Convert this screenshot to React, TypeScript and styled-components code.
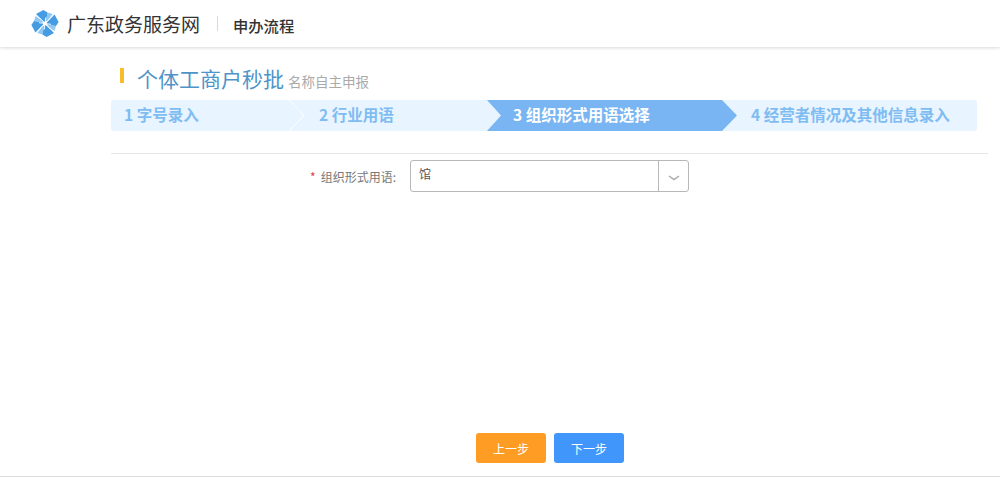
import React from "react";
import styled, { createGlobalStyle } from "styled-components";

const GlobalStyle = createGlobalStyle`
	html,
	body {
		margin: 0;
		padding: 0;
		background: #fff;
		font-family: "Noto Sans CJK SC", "Liberation Sans", sans-serif;
	}
`;

const steps = [
	{ label: "1 字号录入", width: 179, indent: 13 },
	{ label: "2 行业用语", width: 197, indent: 29 },
	{ label: "3 组织形式用语选择", width: 250, indent: 26, active: true },
	{ label: "4 经营者情况及其他信息录入", width: 240, indent: 14 },
];

const Logo = () => (
	<svg width="28" height="29" viewBox="-14 -14.5 28 29">
		{[0, 90, 180, 270].map((angle) => (
			<g key={angle} transform={`rotate(${angle})`}>
				<path d="M1 -2.5 L2.6 -11 L7.6 -9.4 L2.5 -2.5 Z" fill="#8fc8f4" />
				<path d="M-0.5 -1 L-9 -9.6 L-1.6 -13.6 L2.6 -11 L1 -2.5 Z" fill="#469ce2" />
				<path d="M0 0 L-5 -5.2" stroke="#fff" strokeWidth="0.9" />
				<path d="M0 0 L0.8 -6" stroke="#fff" strokeWidth="0.9" />
			</g>
		))}
		<rect x="-1.7" y="-1.7" width="3.4" height="3.4" fill="#fff" />
	</svg>
);

const App = () => {
	return (
		<Page>
			<GlobalStyle />
			<Header>
				<LogoWrap>
					<Logo />
				</LogoWrap>
				<SiteName>广东政务服务网</SiteName>
				<HeaderRule />
				<HeaderTitle>申办流程</HeaderTitle>
			</Header>
			<Main>
				<TitleRow>
					<TitleMark />
					<Title>个体工商户秒批</Title>
					<SubTitle>名称自主申报</SubTitle>
				</TitleRow>
				<Stepper>
					{steps.map((s, i) => (
						<Step key={s.label} $width={s.width} $indent={s.indent} $active={!!s.active}>
							{s.label}
							{i === 0 && (
								<Separator width="16" height="31" viewBox="0 0 16 31">
									<path d="M0 0 L15 15.5 L0 31" fill="none" stroke="#fff" strokeWidth="1" />
								</Separator>
							)}
						</Step>
					))}
				</Stepper>
				<Rule />
				<FormRow>
					<FieldLabel>
						<Required>*</Required>组织形式用语:
					</FieldLabel>
					<SelectBox>
						<SelectValue>馆</SelectValue>
						<SelectArrow>
							<svg width="14" height="8" viewBox="0 0 14 8">
								<path d="M2 2 L7 5.6 L12 2" fill="none" stroke="#aaa" strokeWidth="1.5" />
							</svg>
						</SelectArrow>
					</SelectBox>
				</FormRow>
			</Main>
			<Actions>
				<ActionButton $color="#ff9c24">上一步</ActionButton>
				<ActionButton $color="#4096fb">下一步</ActionButton>
			</Actions>
			<FooterLine />
		</Page>
	);
};

export default App;

const Page = styled.div`
	width: 1000px;
	height: 477px;
	display: flex;
	flex-direction: column;
	overflow: hidden;
	background: #fff;
`;

const Header = styled.div`
	height: 47px;
	flex-shrink: 0;
	display: flex;
	align-items: center;
	padding-left: 31px;
	box-sizing: border-box;
	box-shadow: 0 1px 3px rgba(120, 130, 150, 0.3);
`;

const LogoWrap = styled.div`
	width: 28px;
	height: 29px;
	margin-right: 8px;
`;

const SiteName = styled.div`
	font-size: 19px;
	color: #333;
	line-height: 26px;
	margin-top: 1px;
	white-space: nowrap;
`;

const HeaderRule = styled.div`
	width: 1px;
	height: 15px;
	background: #d8d8d8;
	margin: 0 15px 0 17px;
`;

const HeaderTitle = styled.div`
	font-size: 15.3px;
	font-weight: 500;
	color: #333;
	line-height: 22px;
	margin-top: 3px;
	white-space: nowrap;
`;

const Main = styled.div`
	flex: 1;
	padding: 17px 12px 0 111px;
`;

const TitleRow = styled.div`
	height: 36px;
	box-sizing: border-box;
	display: flex;
	align-items: center;
	padding: 0 0 8px 9px;
`;

const TitleMark = styled.div`
	width: 4px;
	height: 15px;
	background: #f7bd2b;
	margin: 0 13px 5px 0;
`;

const Title = styled.div`
	font-size: 21px;
	color: #4f94c9;
	line-height: 30px;
	white-space: nowrap;
`;

const SubTitle = styled.div`
	font-size: 13.5px;
	color: #aaa;
	margin: 5px 0 0 4px;
	white-space: nowrap;
`;

const Stepper = styled.div`
	width: 866px;
	height: 31px;
	display: flex;
	background: #e8f4ff;
	border-radius: 3px;
`;

const Step = styled.div<{ $width: number; $indent: number; $active: boolean }>`
	position: relative;
	width: ${(p) => p.$width}px;
	box-sizing: border-box;
	padding-left: ${(p) => p.$indent}px;
	font-size: 15.5px;
	font-weight: 700;
	line-height: 29px;
	white-space: nowrap;
	color: ${(p) => (p.$active ? "#fff" : "#7fbcf2")};
	background: ${(p) => (p.$active ? "#79b5f2" : "transparent")};
	clip-path: ${(p) =>
		p.$active
			? "polygon(0 0, calc(100% - 15px) 0, 100% 50%, calc(100% - 15px) 100%, 0 100%, 14px 50%)"
			: "none"};
`;

const Separator = styled.svg`
	position: absolute;
	top: 0;
	right: -15px;
`;

const Rule = styled.div`
	height: 1px;
	background: #e6e6e6;
	margin-top: 22px;
`;

const FormRow = styled.div`
	display: flex;
	align-items: center;
	margin-top: 6px;
`;

const FieldLabel = styled.div`
	width: 285px;
	text-align: right;
	font-size: 12px;
	color: #777;
	margin-right: 14px;
	white-space: nowrap;
`;

const Required = styled.span`
	color: #e04040;
	margin-right: 5px;
`;

const SelectBox = styled.div`
	width: 279px;
	height: 32px;
	box-sizing: border-box;
	display: flex;
	border: 1px solid #b8b8b8;
	border-radius: 3px;
`;

const SelectValue = styled.div`
	flex: 1;
	padding: 0 8px;
	font-size: 12px;
	line-height: 26px;
	color: #555;
`;

const SelectArrow = styled.div`
	width: 30px;
	display: flex;
	align-items: center;
	justify-content: center;
	border-left: 1px solid #b8b8b8;
	padding-top: 3px;
	box-sizing: border-box;
`;

const Actions = styled.div`
	display: flex;
	justify-content: center;
	gap: 8px;
	margin-bottom: 13px;
	padding-left: 100px;
`;

const ActionButton = styled.button<{ $color: string }>`
	width: 70px;
	height: 30px;
	border: none;
	border-radius: 3px;
	padding: 0;
	font-family: inherit;
	font-size: 12px;
	color: #fff;
	background: ${(p) => p.$color};
	cursor: pointer;
`;

const FooterLine = styled.div`
	height: 1px;
	background: #dcdcdc;
	flex-shrink: 0;
`;
